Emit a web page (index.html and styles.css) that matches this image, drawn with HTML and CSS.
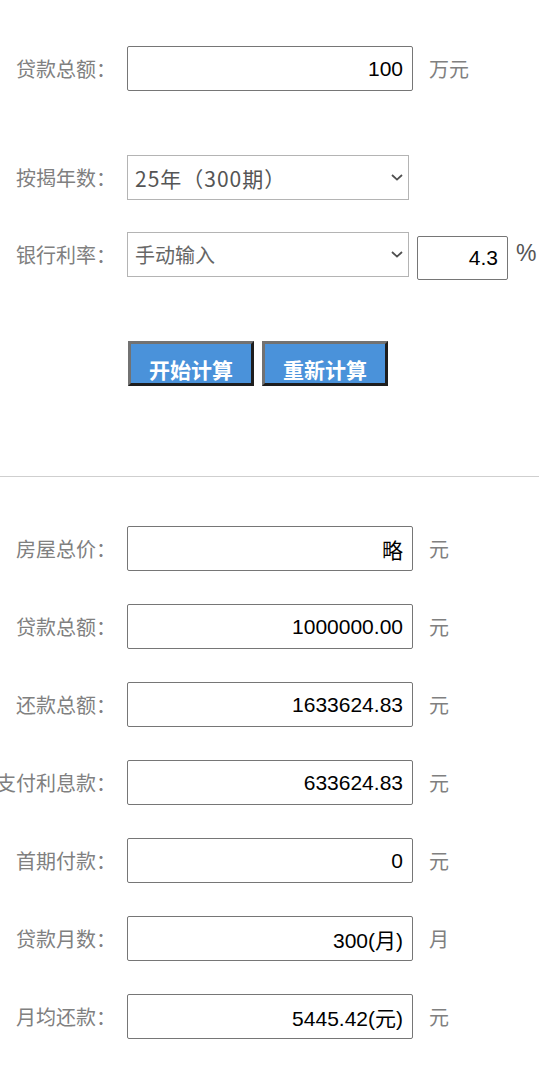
FILE: index.html
```html
<!DOCTYPE html>
<html lang="zh-CN">
<head>
    <meta charset="UTF-8">
    <title>房贷计算器</title>
    <link rel="stylesheet" href="styles.css">
</head>
<body>
    <form class="calc" id="loanForm">
        <div class="row row-amount">
            <label class="label" for="amount">贷款总额：</label>
            <input class="field" type="text" id="amount" value="100">
            <span class="unit">万元</span>
        </div>
        <div class="row row-years">
            <label class="label" for="years">按揭年数：</label>
            <select class="pick pick-years" id="years">
                <option>25年（300期）</option>
            </select>
        </div>
        <div class="row">
            <label class="label" for="rateType">银行利率：</label>
            <select class="pick pick-rate" id="rateType">
                <option>手动输入</option>
            </select>
            <input class="field field-rate" type="text" id="rate" value="4.3">
            <span class="pct">%</span>
        </div>
        <div class="actions">
            <button type="button" class="btn">开始计算</button>
            <button type="reset" class="btn">重新计算</button>
        </div>
    </form>

    <hr class="sep">

    <div class="result">
        <div class="row">
            <label class="label">房屋总价：</label>
            <input class="field" type="text" value="略" readonly>
            <span class="unit">元</span>
        </div>
        <div class="row">
            <label class="label">贷款总额：</label>
            <input class="field" type="text" value="1000000.00" readonly>
            <span class="unit">元</span>
        </div>
        <div class="row">
            <label class="label">还款总额：</label>
            <input class="field" type="text" value="1633624.83" readonly>
            <span class="unit">元</span>
        </div>
        <div class="row">
            <label class="label">支付利息款：</label>
            <input class="field" type="text" value="633624.83" readonly>
            <span class="unit">元</span>
        </div>
        <div class="row">
            <label class="label">首期付款：</label>
            <input class="field" type="text" value="0" readonly>
            <span class="unit">元</span>
        </div>
        <div class="row">
            <label class="label">贷款月数：</label>
            <input class="field" type="text" value="300(月)" readonly>
            <span class="unit">月</span>
        </div>
        <div class="row">
            <label class="label">月均还款：</label>
            <input class="field" type="text" value="5445.42(元)" readonly>
            <span class="unit">元</span>
        </div>
    </div>
</body>
</html>
```

FILE: styles.css
```css
body { margin: 0; padding: 0; background-color: #fff; font-family: "Noto Sans CJK SC", sans-serif; overflow-x: hidden; }

.calc { padding-top: 46px; margin: 0; }
.row { display: flex; align-items: center; height: 45px; }
.row-amount { margin-bottom: 64px; }
.row-years { margin-bottom: 32px; }

/* labels are right aligned, long ones spill out to the left */
.label { flex: 0 0 116px; width: 116px; margin-right: 11px; display: flex; justify-content: flex-end; white-space: nowrap; font-size: 20px; color: #808080; }

.field { box-sizing: border-box; width: 286px; height: 45px; padding: 0 9px; border: 1px solid #767676; border-radius: 2px; text-align: right; font-family: "Liberation Sans", Arial, "Noto Sans CJK SC", sans-serif; font-size: 21px; color: #000; background-color: #fff; outline: none; }
.field-rate { width: 91px; height: 44px; margin-left: 8px; margin-top: 6px; }

.unit { margin-left: 16px; font-size: 20px; color: #808080; white-space: nowrap; }
.pct { margin: 0 0 4px 8px; line-height: 24px; font-family: "Liberation Sans", Arial, sans-serif; font-size: 23px; color: #555; }

.pick { box-sizing: border-box; width: 282px; height: 45px; padding: 0 24px 0 7px; border: 1px solid #b4b4b4; border-radius: 0; -webkit-appearance: none; appearance: none; font-family: "Noto Sans CJK SC", sans-serif; font-size: 20px; color: #555; background: #fff url("data:image/svg+xml,%3Csvg xmlns='http://www.w3.org/2000/svg' width='12' height='7' viewBox='0 0 12 7'%3E%3Cpath d='M1 1l5 4.6L11 1' fill='none' stroke='%23505050' stroke-width='1.8'/%3E%3C/svg%3E") no-repeat right 5px center; }
.pick-years { font-size: 21px; letter-spacing: 1px; }
.pick-rate { color: #666; }

.actions { display: flex; gap: 8px; margin: 64px 0 0 128px; }
.btn { box-sizing: border-box; width: 126px; height: 45px; padding: 12px 0 0; border: 3px solid; border-color: #727272 #1e1e1e #1e1e1e #727272; background-color: #4a92da; color: #fff; font-family: "Noto Sans CJK SC", sans-serif; font-size: 21px; font-weight: bold; line-height: 27px; cursor: pointer; }

.sep { margin: 90px 0 0; border: 0; border-top: 1px solid #cfcfcf; height: 0; }

.result { padding-top: 49px; display: grid; gap: 33px; }
```
